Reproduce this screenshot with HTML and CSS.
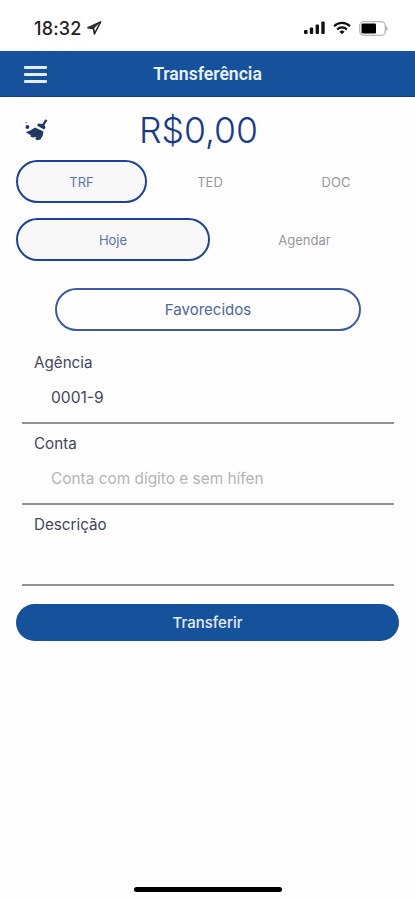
FILE: index.html
```html
<!DOCTYPE html>
<html lang="pt-BR">
<head>
    <meta charset="UTF-8">
    <meta name="viewport" content="width=device-width, initial-scale=1.0">
    <title>Transferência</title>
    <link rel="stylesheet" href="styles.css">
</head>
<body>
    <div class="screen">
        <div class="status-bar">
            <div class="status-time">
                <span class="clock">18:32</span>
                <svg class="location-icon" width="15" height="14" viewBox="0 0 15 14">
                    <path d="M13.6 1 1 6.8l5.6.8.8 5.4z" fill="none" stroke="#222" stroke-width="1.6" stroke-linejoin="round"/>
                    <path d="M13.6 1 1.4 6.7l5.4 1.1z" fill="#333"/>
                </svg>
            </div>
            <div class="status-icons">
                <svg width="21" height="14" viewBox="0 0 21 14" fill="#111">
                    <rect x="0" y="9" width="3.6" height="4" rx="1"/>
                    <rect x="5.8" y="6.5" width="3.4" height="6.5" rx="1"/>
                    <rect x="11.6" y="3.5" width="3.4" height="9.5" rx="1"/>
                    <rect x="17.3" y="0.5" width="3.4" height="12.5" rx="1"/>
                </svg>
                <svg width="18" height="14" viewBox="0 0 18 14" fill="none" stroke="#111" stroke-width="2.1">
                    <path d="M1 5.2a11.2 11.2 0 0 1 16 0"/>
                    <path d="M4.1 8.4a6.9 6.9 0 0 1 9.8 0"/>
                    <path d="M9 13.2 6.4 10.7a3.7 3.7 0 0 1 5.2 0z" fill="#111" stroke="none"/>
                </svg>
                <svg width="29" height="15" viewBox="0 0 29 15">
                    <rect x="0.7" y="0.7" width="25.6" height="13.6" rx="4" fill="none" stroke="#b5b5b5" stroke-width="1.3"/>
                    <rect x="2.5" y="2.5" width="14.5" height="10" rx="1.2" fill="#000"/>
                    <path d="M27.3 5c1.6.8 1.6 4.2 0 5z" fill="#999"/>
                </svg>
            </div>
        </div>

        <div class="header">
            <button class="menu-button" aria-label="Menu">
                <span></span>
                <span></span>
                <span></span>
            </button>
            <h1 class="title">Transferência</h1>
        </div>

        <div class="content">
            <div class="amount-row">
                <svg class="clear-icon" width="23" height="23" viewBox="0 0 23 23" fill="#203864">
                    <path d="M20.4.2 22.4 1.4 19.4 6l1.2 2.8-1.6 1.8L12 6.6l1.2-2 4.2.4z"/>
                    <path d="m10 8.6 8.4 4-.6 4-2.4 3.8-3.2.8-2-1.2 1.2-2-3.8.6-2.6-1.4 1-1L.6 13.2l4.6-1.6z"/>
                    <circle cx="2.4" cy="8" r="1.9"/>
                    <circle cx="1.2" cy="3.6" r=".8" opacity=".6"/>
                </svg>
                <span class="amount">R$0,00</span>
            </div>

            <div class="tabs tabs-type">
                <button class="tab active">TRF</button>
                <button class="tab">TED</button>
                <button class="tab">DOC</button>
            </div>

            <div class="tabs tabs-date">
                <button class="tab active">Hoje</button>
                <button class="tab">Agendar</button>
            </div>

            <button class="favorites">Favorecidos</button>

            <div class="form">
                <div class="field">
                    <label for="agencia">Agência</label>
                    <input type="text" id="agencia" value="0001-9">
                </div>
                <div class="field">
                    <label for="conta">Conta</label>
                    <input type="text" id="conta" placeholder="Conta com dígito e sem hífen">
                </div>
                <div class="field">
                    <label for="descricao">Descrição</label>
                    <input type="text" id="descricao">
                </div>
            </div>

            <button class="submit">Transferir</button>
        </div>

        <div class="home-indicator"></div>
    </div>
</body>
</html>
```
FILE: styles.css
```css
* {
    box-sizing: border-box;
}
body {
    margin: 0;
    font-family: Inter, Roboto, sans-serif;
    background-color: #fff;
    color: #42465a;
}
button, input {
    font-family: inherit;
    margin: 0;
}
button {
    background: none;
    border: none;
    padding: 0;
}
.screen {
    display: flex;
    flex-direction: column;
    height: 900px;
    background-color: #fefefe;
}
/* Barra de status */
.status-bar {
    display: flex;
    justify-content: space-between;
    height: 51px;
    padding: 21px 27px 0 34px;
    background-color: #fff;
}
.status-time {
    display: flex;
    gap: 5px;
}
.clock {
    font-size: 18px;
    line-height: 15px;
    font-weight: 500;
    letter-spacing: 0.2px;
    color: #222;
}
.status-icons {
    display: flex;
    gap: 8px;
}
/* Cabeçalho */
.header {
    display: grid;
    grid-template-columns: 70px 1fr 70px;
    align-items: center;
    height: 46px;
    background-color: #15529b;
    border-bottom: 1px solid #0b3f8c;
}
.menu-button {
    display: flex;
    flex-direction: column;
    gap: 4px;
    width: 23px;
    margin-top: 1px;
    margin-left: 24px;
}
.menu-button span {
    height: 3px;
    background-color: #e4ecfa;
    border-radius: 1px;
}
.title {
    margin: 0;
    font-family: Roboto, sans-serif;
    font-size: 17.6px;
    font-weight: 600;
    text-align: center;
    color: #eaf1ff;
}
/* Conteúdo */
.content {
    display: flex;
    flex-direction: column;
    padding: 0 16px;
}
.amount-row {
    display: grid;
    grid-template-columns: 40px 1fr 58px;
    align-items: center;
    height: 63px;
    padding-top: 4px;
}
.clear-icon {
    margin-left: 9px;
}
.amount {
    font-size: 35.5px;
    font-weight: 300;
    text-align: center;
    color: #153a90;
}
.tabs {
    display: grid;
    height: 43px;
}
.tabs-type {
    grid-template-columns: 131px 126px 126px;
}
.tabs-date {
    grid-template-columns: 194px 189px;
    margin-top: 15px;
}
.tab {
    border-radius: 22px;
    font-size: 13px;
    color: #94979e;
}
.tab.active {
    border: 2px solid #1d429a;
    background-color: #f8f8f9;
    color: #5c74ae;
}
.favorites {
    height: 43px;
    margin: 27px 38px 0 39px;
    border: 2px solid #3c5ca2;
    border-radius: 22px;
    font-size: 15px;
    color: #4b66a0;
}
.form {
    margin: 12px 5px 0 6px;
}
.field {
    display: flex;
    flex-direction: column;
    height: 81px;
    border-bottom: 2px solid #929292;
}
.field label {
    padding: 10px 12px 0;
    font-size: 15.2px;
    line-height: 20px;
}
.field input {
    height: 30px;
    margin-top: 9px;
    padding: 0 29px;
    border: none;
    outline: none;
    background: none;
    font-size: 15.6px;
    color: #42465a;
}
.field input::placeholder {
    font-size: 15.4px;
    color: #b4b4b6;
}
.submit {
    height: 37px;
    margin-top: 18px;
    border-radius: 19px;
    background-color: #15529b;
    font-size: 15px;
    font-weight: 500;
    color: #e6eefc;
}
.home-indicator {
    width: 148px;
    height: 5px;
    margin: auto auto 8px 134px;
    border-radius: 3px;
    background-color: #000;
}
```
